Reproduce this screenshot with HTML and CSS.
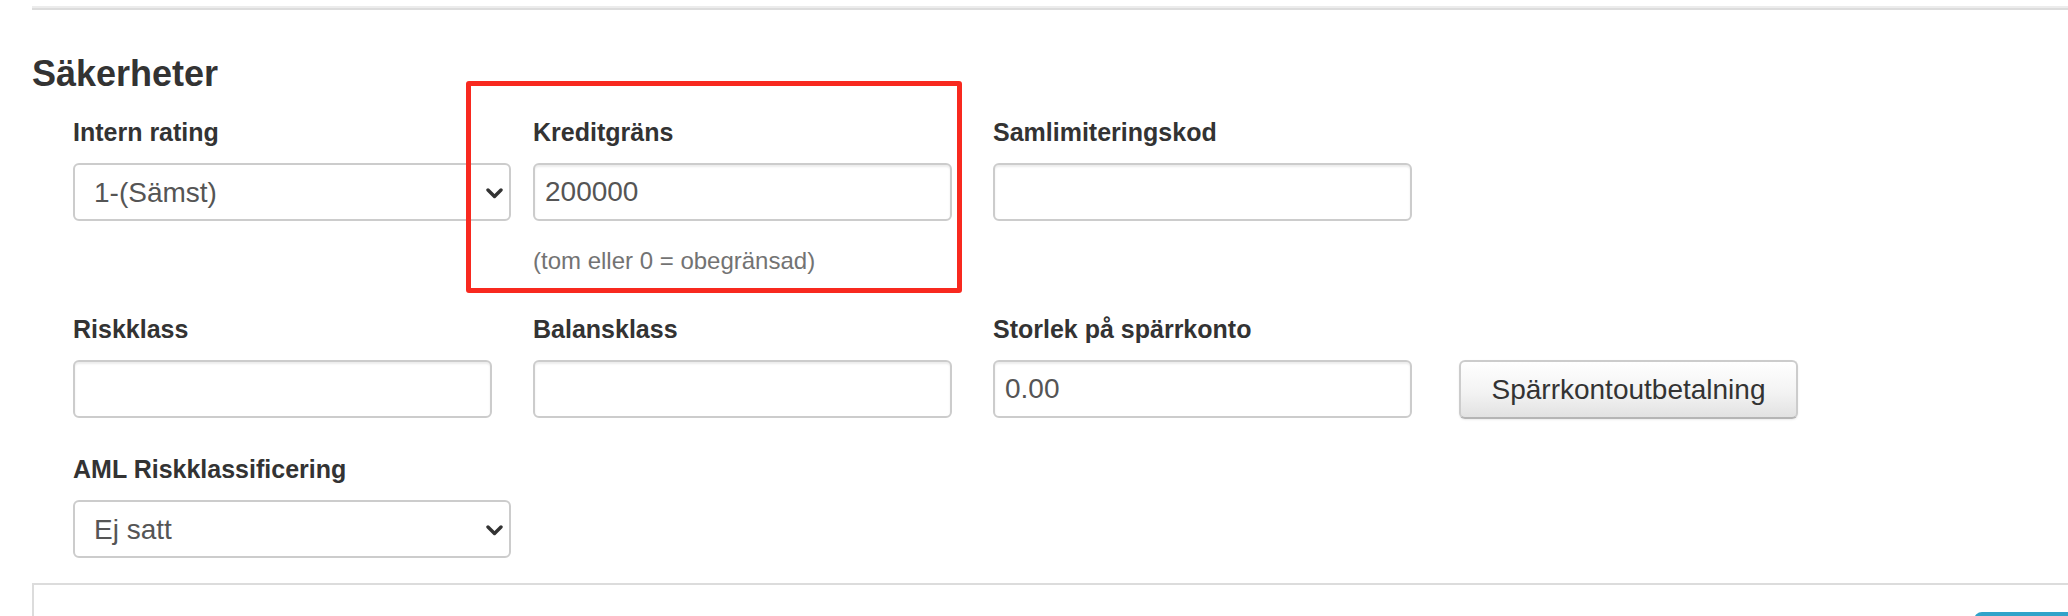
FILE: index.html
```html
<!DOCTYPE html>
<html lang="sv">
<head>
<meta charset="utf-8">
<title>Säkerheter</title>
<link rel="stylesheet" href="styles.css">
</head>
<body>
  <div class="panel-end"></div>

  <section class="section">
    <h3 class="section-title">Säkerheter</h3>

    <div class="form-row row-1">
      <div class="field">
        <label class="label">Intern rating</label>
        <div class="select-wrap">
          <select class="control select">
            <option>1-(Sämst)</option>
          </select>
          <svg class="chevron" width="17" height="11" viewBox="0 0 17 11"><polyline points="2,2 8.5,8.5 15,2" fill="none" stroke="#333" stroke-width="3.4" stroke-linecap="round" stroke-linejoin="round"/></svg>
        </div>
      </div>
      <div class="field">
        <label class="label">Kreditgräns</label>
        <input class="control" type="text" value="200000">
        <p class="help">(tom eller 0 = obegränsad)</p>
      </div>
      <div class="field">
        <label class="label">Samlimiteringskod</label>
        <input class="control" type="text" value="">
      </div>
    </div>

    <div class="form-row row-2">
      <div class="field">
        <label class="label">Riskklass</label>
        <input class="control" type="text" value="">
      </div>
      <div class="field">
        <label class="label">Balansklass</label>
        <input class="control" type="text" value="">
      </div>
      <div class="field">
        <label class="label">Storlek på spärrkonto</label>
        <input class="control" type="text" value="0.00">
      </div>
      <div class="field field-btn">
        <label class="label">&nbsp;</label>
        <button class="btn" type="button">Spärrkontoutbetalning</button>
      </div>
    </div>

    <div class="form-row row-3">
      <div class="field">
        <label class="label">AML Riskklassificering</label>
        <div class="select-wrap">
          <select class="control select">
            <option>Ej satt</option>
          </select>
          <svg class="chevron" width="17" height="11" viewBox="0 0 17 11"><polyline points="2,2 8.5,8.5 15,2" fill="none" stroke="#333" stroke-width="3.4" stroke-linecap="round" stroke-linejoin="round"/></svg>
        </div>
      </div>
    </div>
  </section>

  <div class="bottom-panel">
    <button class="btn-info" type="button"></button>
  </div>

  <div class="highlight"></div>
</body>
</html>
```

FILE: styles.css
```css
html, body {
  margin: 0;
  padding: 0;
  background: #ffffff;
}

html {
  overflow: hidden;
}

body {
  position: relative;
  overflow: hidden;
  height: 616px;
  font-family: "Liberation Sans", Arial, Helvetica, sans-serif;
  color: #333333;
}

.panel-end {
  margin: 6px 0 0 32px;
  height: 2px;
  background: #ececec;
  border-bottom: 2px solid #dcdcdc;
}

.section {
  margin-left: 32px;
}

.section-title {
  margin: 44px 0 23px 0;
  font-size: 36px;
  line-height: 40px;
  font-weight: bold;
  color: #333333;
}

.form-row {
  display: grid;
  grid-template-columns: 419px 419px 419px auto;
  column-gap: 41px;
  align-items: start;
  padding-left: 41px;
}

.row-1 { margin-bottom: 38px; }
.row-2 { margin-bottom: 35px; }

.field {
  display: flex;
  flex-direction: column;
}

.label {
  display: block;
  font-size: 25px;
  line-height: 30px;
  font-weight: bold;
  color: #333333;
  margin-bottom: 16px;
  white-space: nowrap;
}

.control {
  box-sizing: border-box;
  width: 100%;
  height: 58px;
  margin: 0;
  padding: 0 10px;
  border: 2px solid #cccccc;
  border-radius: 6px;
  background: #ffffff;
  box-shadow: inset 0 2px 2px rgba(0, 0, 0, 0.075);
  font-family: "Liberation Sans", Arial, Helvetica, sans-serif;
  font-size: 28px;
  color: #555555;
  outline: none;
}

.select-wrap {
  position: relative;
  width: calc(100% + 19px);
}

.select {
  -webkit-appearance: none;
  appearance: none;
  width: 100%;
  padding: 0 40px 0 19px;
  box-shadow: none;
}

.chevron {
  position: absolute;
  right: 8px;
  top: 25px;
  pointer-events: none;
}

.help {
  margin: 25px 0 0 0;
  font-size: 24px;
  line-height: 30px;
  color: #737373;
  white-space: nowrap;
}

.field-btn {
  padding-left: 6px;
}

.btn {
  box-sizing: border-box;
  width: 339px;
  height: 59px;
  margin: 0;
  padding: 0;
  border: 2px solid #cccccc;
  border-bottom-color: #b5b5b5;
  border-radius: 6px;
  background: linear-gradient(to bottom, #ffffff 0%, #f3f3f3 55%, #e2e2e2 100%);
  box-shadow: 0 1px 2px rgba(0, 0, 0, 0.08);
  font-family: "Liberation Sans", Arial, Helvetica, sans-serif;
  font-size: 28px;
  color: #333333;
  text-align: center;
}

.bottom-panel {
  box-sizing: border-box;
  margin: 25px -60px 0 32px;
  height: 34px;
  overflow: hidden;
  border-top: 2px solid #dcdcdc;
  border-left: 2px solid #dcdcdc;
  background: #ffffff;
  display: flex;
  justify-content: flex-end;
  align-items: flex-start;
  padding-top: 27px;
}

.btn-info {
  flex: none;
  width: 154px;
  height: 60px;
  margin: 0;
  border: 0;
  border-radius: 8px;
  background: #31a3c9;
}

.highlight {
  position: absolute;
  left: 466px;
  top: 81px;
  width: 496px;
  height: 212px;
  box-sizing: border-box;
  border: 5px solid #f8291f;
  border-radius: 3px;
  pointer-events: none;
}
```
